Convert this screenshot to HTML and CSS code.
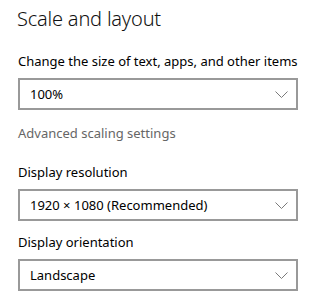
FILE: index.html
```html
<!DOCTYPE html>
<html lang="en">
  <head>
    <meta charset="utf-8">
    <link rel="stylesheet" href="styles.css">
    <title>Scale and layout</title>
  </head>
  <body>
    <div class="panel">
      <h1 class="panel__title">Scale and layout</h1>

      <div class="field field--first">
        <div class="field__label">Change the size of text, apps, and other items</div>
        <div class="select">
          <span class="select__value">100%</span>
          <svg class="select__chevron" width="13" height="7" viewBox="0 0 13 7">
            <path d="M0.5 0.5 L6.5 6.5 L12.5 0.5" fill="none" stroke="#7a7a7a" stroke-width="1"/>
          </svg>
        </div>
      </div>

      <div class="link">Advanced scaling settings</div>

      <div class="field">
        <div class="field__label">Display resolution</div>
        <div class="select">
          <span class="select__value">1920 × 1080 (Recommended)</span>
          <svg class="select__chevron" width="13" height="7" viewBox="0 0 13 7">
            <path d="M0.5 0.5 L6.5 6.5 L12.5 0.5" fill="none" stroke="#7a7a7a" stroke-width="1"/>
          </svg>
        </div>
      </div>

      <div class="field field--tight">
        <div class="field__label">Display orientation</div>
        <div class="select">
          <span class="select__value">Landscape</span>
          <svg class="select__chevron" width="13" height="7" viewBox="0 0 13 7">
            <path d="M0.5 0.5 L6.5 6.5 L12.5 0.5" fill="none" stroke="#7a7a7a" stroke-width="1"/>
          </svg>
        </div>
      </div>
    </div>
  </body>
</html>
```

FILE: styles.css
```css
* { box-sizing: border-box; }

body {
  margin: 0;
  background: #fff;
  color: #000;
  font-family: "Noto Sans", "Open Sans", sans-serif;
}

.panel {
  width: 329px;
  padding: 5px 0 0 18px;
}

.panel__title {
  margin: 0 0 0 -1px;
  font-size: 20px;
  font-weight: 300;
  letter-spacing: -0.2px;
  line-height: 28px;
  color: #111;
}

.field { margin-top: 21px; }
.field--first { margin-top: 19px; }
.field--tight { margin-top: 12px; }

.field__label {
  font-size: 13px;
  line-height: 18px;
  margin-bottom: 8px;
}

.select {
  width: 280px;
  height: 32px;
  border: 2px solid #999;
  display: flex;
  align-items: center;
  justify-content: space-between;
  padding: 0 8px 0 10px;
  font-size: 13px;
}

.select__chevron { display: block; }

.link {
  margin-top: 14px;
  font-size: 13px;
  line-height: 18px;
  color: #666;
}
```
